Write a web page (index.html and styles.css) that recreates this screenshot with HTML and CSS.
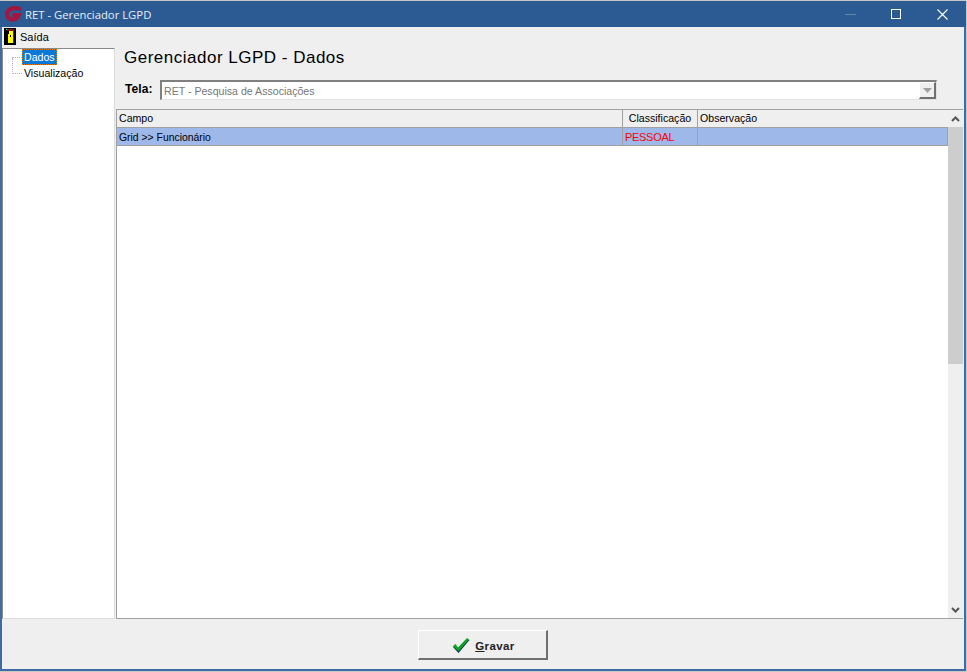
FILE: index.html
```html
<!DOCTYPE html>
<html lang="pt">
<head>
<meta charset="utf-8">
<title>RET - Gerenciador LGPD</title>
<link rel="stylesheet" href="styles.css">
</head>
<body>
<div class="window">
  <header class="titlebar">
    <svg class="app-logo" width="18" height="18" viewBox="0 0 18 18"><path d="M17 4.500C12.500 2 6 2.600 3.700 7c-1.700 3.600.8 7.500 5 7.500 3 0 5-1.500 6-4.500H8.500" fill="none" stroke="#a3163f" stroke-width="4.200"/></svg>
    <span class="title-text">RET - Gerenciador LGPD</span>
    <div class="win-buttons">
      <span class="win-btn"><svg width="11" height="11" viewBox="0 0 11 11"><path d="M0 5.500h11" stroke="#5f83ad" stroke-width="1"/></svg></span>
      <span class="win-btn"><svg width="11" height="11" viewBox="0 0 11 11"><rect x=".5" y=".5" width="9" height="9" fill="none" stroke="#fff"/></svg></span>
      <span class="win-btn"><svg width="11" height="11" viewBox="0 0 11 11"><path d="M.5.500l10 10M10.500.500l-10 10" stroke="#fff" stroke-width="1.100"/></svg></span>
    </div>
  </header>
  <nav class="menubar">
    <svg width="12" height="17" viewBox="0 0 12 17"><rect width="12" height="17" fill="#000"/><rect x="2" y="1" width="1" height="1" fill="#19e0f0"/><rect x="3" y="1" width="7" height="2" fill="#8a1414"/><rect x="9" y="3" width="1" height="12" fill="#8a1414"/><rect x="5" y="3" width="4" height="12" fill="#ffff00"/><rect x="4" y="6" width="1" height="9" fill="#ffff00"/><rect x="6" y="7" width="1" height="2" fill="#000"/></svg>
    <span class="menu-item">Saída</span>
  </nav>
  <div class="main">
    <aside class="tree">
      <div class="tree-row"><span class="tree-dots first"></span><span class="tree-label selected">Dados</span></div>
      <div class="tree-row"><span class="tree-dots last"></span><span class="tree-label">Visualização</span></div>
    </aside>
    <section class="content">
      <h1 class="heading">Gerenciador LGPD - Dados</h1>
      <div class="tela-row">
        <label class="tela-label">Tela:</label>
        <div class="combo">
          <span class="combo-value">RET - Pesquisa de Associações</span>
          <span class="combo-btn"><svg width="9" height="5" viewBox="0 0 9 5"><path d="M0 0h9L4.500 5z" fill="#a0a0a0"/></svg></span>
        </div>
      </div>
      <div class="grid-box">
        <div class="grid">
          <div class="grid-row head">
            <div class="cell c-campo">Campo</div>
            <div class="cell c-class center">Classificação</div>
            <div class="cell c-obs">Observação</div>
          </div>
          <div class="grid-row data">
            <div class="cell c-campo tight">Grid &gt;&gt; Funcionário</div>
            <div class="cell c-class red">PESSOAL</div>
            <div class="cell c-obs"></div>
          </div>
        </div>
        <div class="scrollbar">
          <span class="sb-btn"><svg width="9" height="6" viewBox="0 0 9 6"><path d="M1 5l3.500-3.500L8 5" fill="none" stroke="#555" stroke-width="2"/></svg></span>
          <div class="sb-track"><div class="sb-thumb"></div></div>
          <span class="sb-btn"><svg width="9" height="6" viewBox="0 0 9 6"><path d="M1 1l3.500 3.500L8 1" fill="none" stroke="#555" stroke-width="2"/></svg></span>
        </div>
      </div>
    </section>
  </div>
  <footer class="footer">
    <button class="save-btn" type="button">
      <svg width="18" height="16" viewBox="0 0 18 16"><path d="M1 10l2.500-2 2.500 3.500L15 2l2.500 1L6.500 16z" fill="#0b2a5a"/><path d="M1 9l2.500-2 2.500 3.500L15 1l2 1.500L6.500 14.500z" fill="#0aa51e"/></svg>
      <span class="save-label"><u>G</u>ravar</span>
    </button>
  </footer>
</div>
</body>
</html>
```
FILE: styles.css
```css
* { box-sizing: border-box; }
html, body { margin: 0; height: 100%; }
body {
  background: #c8c8c8;
  font-family: "Liberation Sans", Arial, sans-serif;
  font-size: 10.6px;
  color: #000;
  overflow: hidden;
}
.window {
  width: 966px;
  height: 670px;
  margin-top: 1px;
  display: flex;
  flex-direction: column;
  background: #efefef;
  border-left: 2px solid #3f6ca5;
  border-right: 2px solid #3f6ca5;
  border-bottom: 2px solid #3f6ca5;
}
.titlebar {
  height: 26px;
  margin: 0 -2px;
  padding: 0 1px 0 4px;
  flex: none;
  display: flex;
  align-items: center;
  background: #2c5a92;
  color: #e8eef5;
}
.app-logo { flex: none; }
.title-text {
  margin-left: 3px;
  font-family: "Open Sans", sans-serif;
  font-size: 11.3px;
}
.win-buttons { margin-left: auto; display: flex; }
.win-btn {
  width: 46px;
  height: 26px;
  display: flex;
  align-items: center;
  justify-content: center;
}
.menubar {
  height: 21px;
  flex: none;
  display: flex;
  align-items: center;
  padding: 0 0 2px 2px;
  gap: 4px;
  font-size: 11px;
}
.main { flex: 1; display: flex; min-height: 0; }
.tree {
  width: 113px;
  flex: none;
  background: #fff;
  border-top: 1px solid #8a8a8a;
  border-left: 1px solid #8a8a8a;
  border-right: 1px solid #dcdcdc;
  border-bottom: 1px solid #dcdcdc;
}
.tree-row { height: 16px; display: flex; align-items: center; padding-left: 9px; }
.tree-dots { width: 10px; height: 0; border-top: 1px dotted #b5b5b5; flex: none; }
.tree-dots.last { position: relative; }
.tree-dots.last::before {
  content: "";
  position: absolute;
  left: 0;
  bottom: 0;
  height: 16px;
  border-left: 1px dotted #b5b5b5;
}
.tree-label { padding: 0 2px; line-height: 16px; }
.tree-label.selected {
  background: #0a78d7;
  color: #fff;
  outline: 1px dotted #d97b00;
  outline-offset: -1px;
}
.content { flex: 1; min-width: 0; display: flex; flex-direction: column; padding: 0 1px; }
.heading {
  margin: 0;
  padding: 1px 0 0 8px;
  height: 33px;
  font-size: 17px;
  font-weight: 400;
  letter-spacing: .5px;
  line-height: 18px;
}
.tela-row { height: 28px; display: flex; align-items: flex-start; flex: none; padding-left: 9px; }
.tela-label { width: 35px; font-weight: 700; font-size: 12px; line-height: 16px; letter-spacing: .1px; }
.combo {
  width: 777px;
  height: 20px;
  margin-top: -1px;
  display: flex;
  align-items: center;
  background: #fff;
  border-top: 2px solid #808080;
  border-left: 2px solid #808080;
  border-right: 1px solid #e2e2e2;
  border-bottom: 1px solid #e2e2e2;
  color: #777;
}
.combo-value { padding-left: 2px; flex: 1; }
.combo-btn {
  width: 17px;
  height: 17px;
  display: flex;
  align-items: center;
  justify-content: center;
  background: #efefef;
  border-right: 2px solid #707070;
  border-bottom: 2px solid #707070;
  border-top: 1px solid #fff;
  border-left: 1px solid #fff;
}
.grid-box {
  flex: 1;
  min-height: 0;
  display: flex;
  background: #fff;
  border-top: 1px solid #a0a0a0;
  border-left: 1px solid #a0a0a0;
  border-bottom: 1px solid #a0a0a0;
}
.grid { flex: 1; min-width: 0; }
.grid-row { display: flex; }
.grid-row.head { height: 18px; background: #efefef; border-bottom: 1px solid #a0a0a0; }
.grid-row.data { height: 18px; background: #9db8e9; border-bottom: 1px solid #a0a0a0; border-right: 1px solid #a0a0a0; }
.cell { line-height: 17px; padding-left: 2px; border-right: 1px solid #a0a0a0; white-space: nowrap; overflow: hidden; }
.c-campo { width: 506px; flex: none; }
.c-class { width: 75px; flex: none; }
.c-obs { flex: 1; border-right: 0; }
.center { text-align: center; padding-left: 0; }
.tight { font-size: 10.4px; line-height: 19px; }
.red { color: #ff0000; font-size: 11px; line-height: 19px; letter-spacing: -.3px; }
.scrollbar { width: 15px; flex: none; display: flex; flex-direction: column; background: #efefef; }
.sb-btn { height: 17px; flex: none; display: flex; align-items: center; justify-content: center; }
.sb-track { flex: 1; min-height: 0; }
.sb-thumb { height: 237px; background: #cdcdcd; }
.footer {
  height: 50px;
  flex: none;
  display: flex;
  justify-content: center;
  padding-top: 11px;
}
.save-btn {
  width: 130px;
  height: 30px;
  display: flex;
  align-items: center;
  justify-content: center;
  gap: 5px;
  background: #efefef;
  border-top: 1px solid #fff;
  border-left: 1px solid #fff;
  border-right: 2px solid #707070;
  border-bottom: 2px solid #707070;
  font-family: "Liberation Sans", Arial, sans-serif;
  font-size: 11.5px;
  font-weight: 700;
  letter-spacing: .4px;
  color: #222;
  padding: 0 0 0 2px;
}
.save-label { padding-top: 2px; }
```
